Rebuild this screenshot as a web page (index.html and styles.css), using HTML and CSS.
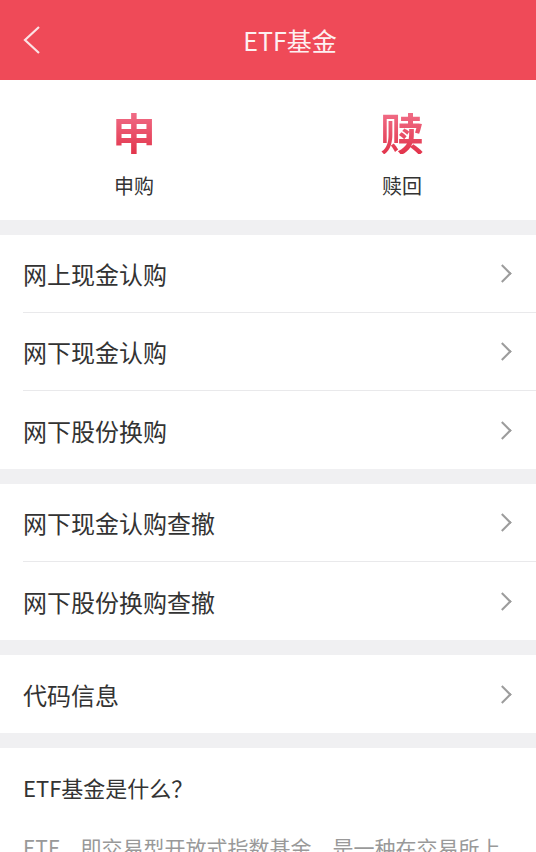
FILE: index.html
```html
<!DOCTYPE html>
<html lang="zh-CN">
<head>
	<meta charset="UTF-8">
	<title>ETF基金</title>
	<link rel="stylesheet" href="styles.css">
</head>
<body>
	<div class="header">
		<svg class="back" width="20" height="30" viewBox="0 0 20 30"><polyline points="16,2 2,15 16,28" fill="none" stroke="#fbe3e5" stroke-width="2.2"/></svg>
		<h1 class="title">ETF基金</h1>
	</div>

	<div class="ops">
		<div class="op">
			<span class="op-big">申</span>
			<span class="op-label">申购</span>
		</div>
		<div class="op">
			<span class="op-big">赎</span>
			<span class="op-label">赎回</span>
		</div>
	</div>

	<ul class="group">
		<li class="row"><span>网上现金认购</span><i class="arrow"></i></li>
		<li class="row"><span>网下现金认购</span><i class="arrow"></i></li>
		<li class="row"><span>网下股份换购</span><i class="arrow"></i></li>
	</ul>

	<ul class="group">
		<li class="row"><span>网下现金认购查撤</span><i class="arrow"></i></li>
		<li class="row"><span>网下股份换购查撤</span><i class="arrow"></i></li>
	</ul>

	<ul class="group">
		<li class="row"><span>代码信息</span><i class="arrow"></i></li>
	</ul>

	<div class="intro">
		<h2 class="intro-title">ETF基金是什么？</h2>
		<p class="intro-text">ETF，即交易型开放式指数基金。是一种在交易所上市交易的、基金份额可变的一种开放式基金。</p>
	</div>
</body>
</html>
```

FILE: styles.css
```css
*{
	margin: 0;
	padding: 0;
	box-sizing: border-box;
}
body{
	width: 536px;
	height: 852px;
	overflow: hidden;
	background: #f0f0f2;
	font-family: "Noto Sans CJK SC", "Noto Sans", sans-serif;
	color: #333;
}
.header{
	height: 80px;
	background: #ef4a58;
	display: flex;
	align-items: center;
	justify-content: center;
	padding-left: 44px;
	position: relative;
}
.back{
	position: absolute;
	left: 23px;
	top: 25px;
}
.title{
	font-size: 25px;
	font-weight: normal;
	color: #fdf0f1;
	line-height: 1;
}
.ops{
	background: #fff;
	display: flex;
	padding: 30px 0 23px;
	margin-bottom: 15px;
}
.op{
	flex: 1;
	display: flex;
	flex-direction: column;
	align-items: center;
	gap: 21px;
}
.op-big{
	font-size: 44px;
	line-height: 44px;
	font-weight: bold;
	background: linear-gradient(#f1708a, #e2344b);
	-webkit-background-clip: text;
	background-clip: text;
	color: transparent;
}
.op-label{
	font-size: 20px;
	line-height: 22px;
	color: #333;
}
.group{
	list-style: none;
	background: #fff;
	margin-bottom: 15px;
}
.row{
	height: 78px;
	margin-left: 23px;
	padding-right: 23px;
	display: flex;
	align-items: center;
	justify-content: space-between;
	font-size: 24px;
	border-bottom: 1px solid #e9e9eb;
}
.row:last-child{
	border-bottom: none;
}
.arrow{
	width: 13px;
	height: 13px;
	border-top: 2px solid #9c9c9c;
	border-right: 2px solid #9c9c9c;
	transform: rotate(45deg);
	margin-right: 4px;
}
.intro{
	background: #fff;
	padding: 26px 23px 0;
	height: 104px;
	overflow: hidden;
}
.intro-title{
	font-size: 22px;
	font-weight: normal;
	line-height: 26px;
	color: #333;
}
.intro-text{
	margin-top: 29px;
	font-size: 21px;
	line-height: 36px;
	color: #999;
}
```
